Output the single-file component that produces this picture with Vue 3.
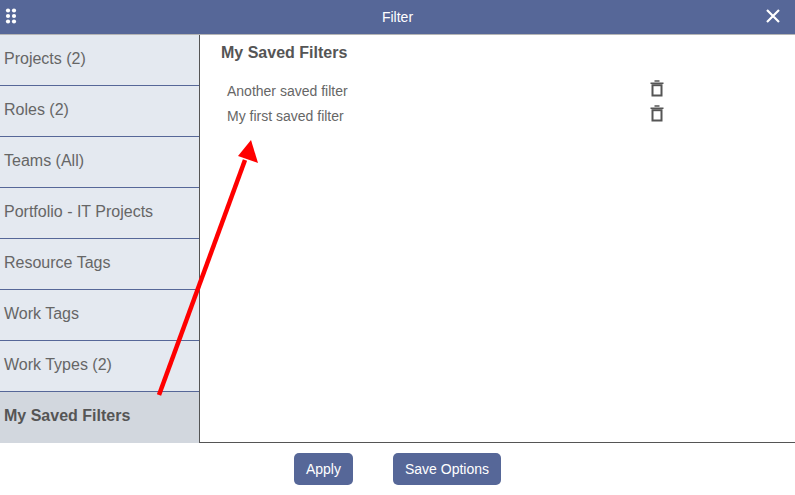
<template>
  <div class="dialog">
    <header class="top-bar">
      <svg class="drag-icon" width="12" height="16" viewBox="0 0 12 16">
        <circle v-for="dot in dots" :key="dot.id" :cx="dot.x" :cy="dot.y" r="2.1" fill="#fff" />
      </svg>
      <span class="title">Filter</span>
      <svg class="close-icon" width="16" height="16" viewBox="0 0 16 16">
        <path d="M2 2 L14 14 M14 2 L2 14" stroke="#fff" stroke-width="2.2" fill="none" />
      </svg>
    </header>

    <div class="body">
      <nav class="side-menu">
        <div
          v-for="item in menu"
          :key="item.label"
          class="menu-item"
          :class="{ active: item.active }"
        >{{ item.label }}</div>
      </nav>
      <main class="content">
        <h2>My Saved Filters</h2>
        <ul class="saved-list">
          <li v-for="filter in savedFilters" :key="filter">
            <span class="filter-name">{{ filter }}</span>
            <svg class="trash" width="14" height="17" viewBox="0 0 14 17">
              <path d="M4.5 1 H9.5 M0.5 3.2 H13.5" stroke="#555" stroke-width="1.6" fill="none" />
              <rect x="2.5" y="5.2" width="9" height="10.3" stroke="#555" stroke-width="2" fill="none" />
            </svg>
          </li>
        </ul>
      </main>
    </div>

    <footer class="actions">
      <button type="button">Apply</button>
      <button type="button">Save Options</button>
    </footer>

    <svg class="arrow" width="795" height="495" viewBox="0 0 795 495">
      <line x1="159" y1="395" x2="245" y2="160" stroke="#ff0000" stroke-width="4.5" />
      <polygon points="251,140 258,163 238,156" fill="#ff0000" />
    </svg>
  </div>
</template>

<script setup>
const dots = [
  { id: 1, x: 3, y: 2.5 },
  { id: 2, x: 9, y: 2.5 },
  { id: 3, x: 3, y: 8 },
  { id: 4, x: 9, y: 8 },
  { id: 5, x: 3, y: 13.5 },
  { id: 6, x: 9, y: 13.5 }
]

const menu = [
  { label: 'Projects (2)' },
  { label: 'Roles (2)' },
  { label: 'Teams (All)' },
  { label: 'Portfolio - IT Projects' },
  { label: 'Resource Tags' },
  { label: 'Work Tags' },
  { label: 'Work Types (2)' },
  { label: 'My Saved Filters', active: true }
]

const savedFilters = ['Another saved filter', 'My first saved filter']
</script>

<style>
html, body {
  margin: 0;
  background: #fff;
  overflow: hidden;
}
</style>

<style scoped>
.dialog {
  position: relative;
  width: 795px;
  height: 495px;
  display: flex;
  flex-direction: column;
  font-family: "Liberation Sans", Arial, sans-serif;
  color: #555;
  background: #fff;
}

.top-bar {
  height: 34px;
  flex: none;
  display: flex;
  align-items: center;
  justify-content: space-between;
  padding: 0 14px 0 5px;
  background: #566798;
  border-bottom: 1px solid #b5b5b5;
  position: relative;
}

.drag-icon {
  margin-top: -3px;
}

.close-icon {
  margin-top: -3px;
}

.title {
  position: absolute;
  left: 0;
  right: 0;
  text-align: center;
  color: #fff;
  font-size: 14px;
}

.body {
  height: 407px;
  flex: none;
  display: flex;
  border-bottom: 1px solid #555;
}

.side-menu {
  width: 199px;
  flex: none;
  border-right: 1px solid #555;
  background: #e4e9f0;
}

.menu-item {
  height: 50px;
  line-height: 47px;
  padding-left: 4px;
  font-size: 16px;
  color: #666;
  border-bottom: 1px solid #566798;
}

.menu-item.active {
  height: 51px;
  border-bottom: 0;
  background: #d2d7de;
  font-weight: bold;
  color: #555;
}

.content {
  flex: 1;
  padding: 9px 0 0 21px;
}

h2 {
  margin: 0;
  font-size: 16px;
  line-height: 18px;
  color: #555;
}

.saved-list {
  list-style: none;
  margin: 16px 0 0;
  padding: 0 0 0 6px;
}

.saved-list li {
  height: 25px;
  display: flex;
  align-items: center;
  font-size: 14px;
  color: #666;
}

.filter-name {
  width: 423px;
}

.trash {
  margin-top: -4px;
}

.actions {
  flex: 1;
  display: flex;
  justify-content: center;
  align-items: flex-start;
  gap: 40px;
  padding-top: 10px;
}

button {
  height: 32px;
  padding: 0 12px;
  border: 0;
  border-radius: 5px;
  background: #566798;
  color: #fff;
  font-family: inherit;
  font-size: 14px;
}

.arrow {
  position: absolute;
  left: 0;
  top: 0;
  pointer-events: none;
}
</style>
